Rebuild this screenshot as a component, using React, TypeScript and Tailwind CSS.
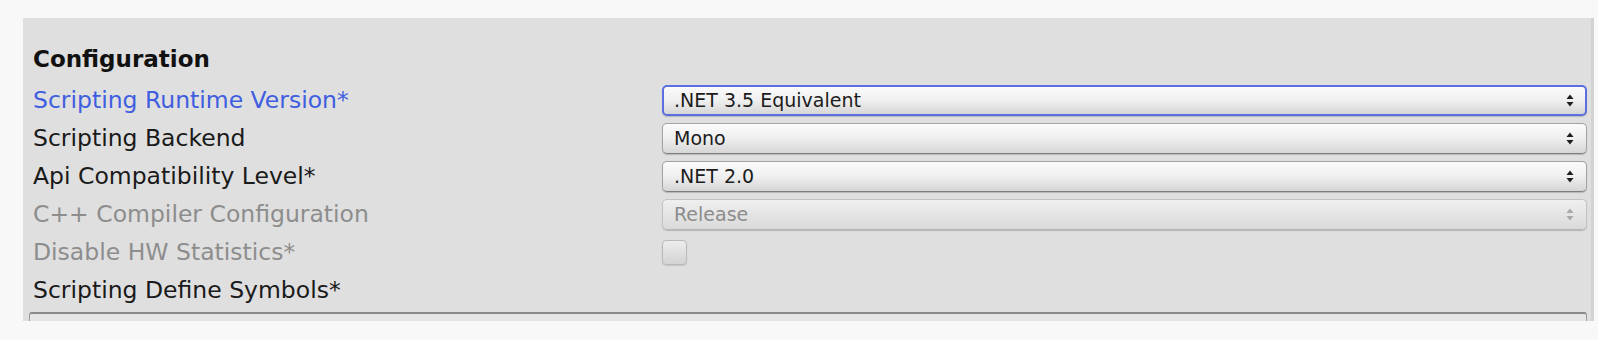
import React from 'react';

type Row = {
  label: string;
  tone?: 'accent' | 'normal' | 'disabled';
  kind: 'select' | 'checkbox' | 'none';
  value?: string;
  focused?: boolean;
};

const rows: Row[] = [
  { label: 'Scripting Runtime Version*', tone: 'accent', kind: 'select', value: '.NET 3.5 Equivalent', focused: true },
  { label: 'Scripting Backend', kind: 'select', value: 'Mono' },
  { label: 'Api Compatibility Level*', kind: 'select', value: '.NET 2.0' },
  { label: 'C++ Compiler Configuration', tone: 'disabled', kind: 'select', value: 'Release' },
  { label: 'Disable HW Statistics*', tone: 'disabled', kind: 'checkbox' },
  { label: 'Scripting Define Symbols*', kind: 'none' },
];

function UpDownArrows({ disabled }: { disabled?: boolean }) {
  const fill = disabled ? '#a8a8a8' : '#1e1e1e';
  return (
    <svg width="8" height="13" viewBox="0 0 8 13" className="shrink-0">
      <path d="M4 0.5 L7.5 5 L0.5 5 Z" fill={fill} />
      <path d="M4 12.5 L7.5 8 L0.5 8 Z" fill={fill} />
    </svg>
  );
}

function Select({ value, focused, disabled }: { value: string; focused?: boolean; disabled?: boolean }) {
  const border = focused
    ? 'border-2 border-[#5b6fdf]'
    : disabled
      ? 'border border-[#c2c2c2] border-b-[#b4b4b4]'
      : 'border border-[#a3a3a3] border-b-[#7e7e7e]';
  const bg = disabled
    ? 'bg-gradient-to-b from-[#efefef] to-[#dadada]'
    : 'bg-gradient-to-b from-[#fbfbfb] via-[#efefef] to-[#d6d6d6]';
  return (
    <div
      className={`flex h-[31px] w-full items-center justify-between rounded-[5px] ${border} ${bg} ${
        focused ? 'pl-[10px] pr-[11px]' : 'pl-[11px] pr-[12px]'
      } shadow-[0_1px_1px_rgba(0,0,0,0.18)]`}
    >
      <span className={`text-[19px] leading-none ${disabled ? 'text-[#8c8c8c]' : 'text-[#1c1c1c]'}`}>{value}</span>
      <UpDownArrows disabled={disabled} />
    </div>
  );
}

function Checkbox() {
  return (
    <div className="h-[25px] w-[25px] rounded-[4px] border border-[#b9b9b9] bg-gradient-to-b from-[#ececec] to-[#d3d3d3] shadow-[0_1px_1px_rgba(0,0,0,0.12)]" />
  );
}

export default function App() {
  return (
    <div
      className="h-[340px] w-[1598px] overflow-hidden bg-[#f8f8f8] pl-[23px] pr-[4px] pt-[18px]"
      style={{ fontFamily: '"DejaVu Sans", Verdana, sans-serif' }}
    >
      <div className="h-[303px] overflow-hidden border-r-[3px] border-[#d2d2d2] bg-[#dfdfdf] pl-[10px] pr-[4px] pt-[21px]">
        <div className="flex h-[40px] items-center">
          <h2 className="text-[23px] font-bold leading-none text-[#111]">Configuration</h2>
        </div>
        <div className="mt-[2px]">
          {rows.map((row) => (
            <div key={row.label} className="grid h-[38px] grid-cols-[629px_1fr] items-center">
              <span
                className={`pt-[2px] text-[23.5px] leading-none ${
                  row.tone === 'accent' ? 'text-[#3f5ee0]' : row.tone === 'disabled' ? 'text-[#8d8d8d]' : 'text-[#1a1a1a]'
                }`}
              >
                {row.label}
              </span>
              <div className="flex items-center">
                {row.kind === 'select' && (
                  <Select value={row.value ?? ''} focused={row.focused} disabled={row.tone === 'disabled'} />
                )}
                {row.kind === 'checkbox' && <Checkbox />}
              </div>
            </div>
          ))}
        </div>
        <div className="ml-[-4px] mt-[3px] h-[40px] w-[1558px] rounded-t-[3px] border-x border-t-2 border-[#8a8a8a] border-x-[#9a9a9a] bg-[#e6e6e6]" />
      </div>
    </div>
  );
}
